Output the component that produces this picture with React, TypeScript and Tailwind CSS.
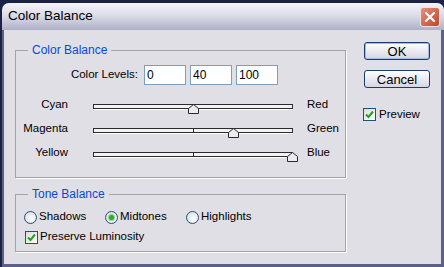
import React from 'react';

const SLIDERS = [
  { left: 'Cyan', right: 'Red', value: 0 },
  { left: 'Magenta', right: 'Green', value: 40 },
  { left: 'Yellow', right: 'Blue', value: 100 },
];

const LEVELS = ['0', '40', '100'];

const Check: React.FC = () => (
  <div className="w-[13px] h-[13px] border border-[#1c5180] bg-gradient-to-br from-[#dcdcd7] to-white flex items-center justify-center">
    <svg width="9" height="9" viewBox="0 0 9 9">
      <polyline points="1,4.5 3.5,7 8,1.5" fill="none" stroke="#21a121" strokeWidth="2" />
    </svg>
  </div>
);

const Radio: React.FC<{ checked?: boolean }> = ({ checked }) => (
  <div className="w-[13px] h-[13px] rounded-full border border-[#1c5180] bg-[radial-gradient(circle_at_60%_60%,#ffffff,#d4d4d8)] flex items-center justify-center">
    {checked && <div className="w-[5px] h-[5px] rounded-full bg-[#2eae2e] shadow-[0_0_0_1px_#8fd28f]" />}
  </div>
);

const Slider: React.FC<{ value: number }> = ({ value }) => (
  <div className="relative w-[200px] h-[5px] border border-[#2c2c2c] bg-[#f2f2f4] shadow-[0_1px_0_#ffffff]">
    <div className="absolute left-1/2 top-0 bottom-0 w-px bg-[#2c2c2c]" />
    <svg
      className="absolute top-[-1px]"
      style={{ left: `${((value + 100) / 200) * 198 - 5}px` }}
      width="11"
      height="10"
      viewBox="0 0 11 10"
    >
      <polygon points="5.5,0.5 10.5,4.5 10.5,9.5 0.5,9.5 0.5,4.5" fill="#ececf0" stroke="#2a2a2a" />
    </svg>
  </div>
);

const Button: React.FC<{ label: string; primary?: boolean }> = ({ label, primary }) => (
  <button
    className={
      primary
        ? 'w-[66px] h-[18px] rounded-[3px] border border-[#1d3c6e] bg-gradient-to-b from-white to-[#d6d6e2] shadow-[inset_0_0_0_1px_#9fbbe6] text-[13px] leading-none text-black'
        : 'w-[66px] h-[18px] rounded-[3px] border border-[#1d3c6e] bg-gradient-to-b from-white to-[#d6d6e2] text-[13px] leading-none text-black'
    }
  >
    {label}
  </button>
);

const App: React.FC = () => {
  return (
    <div className="w-[444px] h-[267px] bg-[#1c2244] pt-[3px] pl-[2px] font-['Liberation_Sans',Arial,sans-serif] text-black">
      <div className="h-full flex flex-col rounded-t-[7px] bg-[#5c5f86] overflow-hidden">
        {/* Title bar */}
        <div className="h-[27px] flex items-center justify-between pl-[6px] pr-[4px] bg-gradient-to-b from-[#f4f4f8] via-[#d9dae6] to-[#aeb0c7]">
          <span className="text-[13.5px] text-black">Color Balance</span>
          <div className="w-[20px] h-[20px] rounded-[3px] border border-[#f2e4e0] bg-gradient-to-br from-[#e6907c] to-[#c0442c] flex items-center justify-center">
            <svg width="12" height="12" viewBox="0 0 12 12">
              <path d="M2 2 L10 10 M10 2 L2 10" stroke="#ffffff" strokeWidth="2.2" strokeLinecap="round" />
            </svg>
          </div>
        </div>

        {/* Client area */}
        <div className="flex-1 ml-[2px] mr-[3px] mb-[3px] bg-[#e0dfe5] flex pt-[12px] pl-[11px] text-[11.5px]">
          <div className="flex flex-col">
            <fieldset className="mt-[1px] w-[331px] h-[135px] border border-[#a3a3a8] shadow-[1px_1px_0_#ffffff]">
              <legend className="ml-[12px] px-[4px] text-[12px] leading-[14px] text-[#0a48d8]">Color Balance</legend>
              <div className="flex items-center pt-[8px]">
                <span className="w-[122px] text-right">Color Levels:</span>
                <div className="flex gap-[4px] ml-[6px]">
                  {LEVELS.map(l => (
                    <div key={l} className="w-[42px] h-[20px] border border-[#7f9db9] bg-white pl-[2px] text-[12px] leading-[18px]">
                      {l}
                    </div>
                  ))}
                </div>
              </div>
              <div className="mt-[9px] flex flex-col">
                {SLIDERS.map(s => (
                  <div key={s.left} className="h-[24px] flex items-center">
                    <span className="w-[52px] text-right mb-[3px]">{s.left}</span>
                    <div className="ml-[25px]">
                      <Slider value={s.value} />
                    </div>
                    <span className="ml-[14px] mb-[3px]">{s.right}</span>
                  </div>
                ))}
              </div>
            </fieldset>

            <fieldset className="mt-[9px] w-[331px] h-[65px] border border-[#a3a3a8] shadow-[1px_1px_0_#ffffff]">
              <legend className="ml-[12px] px-[4px] text-[12px] leading-[14px] text-[#0a48d8]">Tone Balance</legend>
              <div className="pt-[8px] pl-[8px] flex flex-col gap-[4px]">
                <div className="h-[16px] flex items-center">
                  <div className="w-[81px] flex items-center gap-[2px]">
                    <Radio />
                    <span>Shadows</span>
                  </div>
                  <div className="w-[81px] flex items-center gap-[2px]">
                    <Radio checked />
                    <span>Midtones</span>
                  </div>
                  <div className="flex items-center gap-[2px]">
                    <Radio />
                    <span>Highlights</span>
                  </div>
                </div>
                <div className="h-[16px] flex items-center gap-[2px] pl-[1px]">
                  <Check />
                  <span>Preserve Luminosity</span>
                </div>
              </div>
            </fieldset>
          </div>

          <div className="ml-[18px] flex flex-col">
            <Button label="OK" primary />
            <div className="mt-[10px]">
              <Button label="Cancel" />
            </div>
            <div className="mt-[17px] -ml-[1px] flex items-center gap-[3px]">
              <Check />
              <span>Preview</span>
            </div>
          </div>
        </div>
      </div>
    </div>
  );
};

export default App;
